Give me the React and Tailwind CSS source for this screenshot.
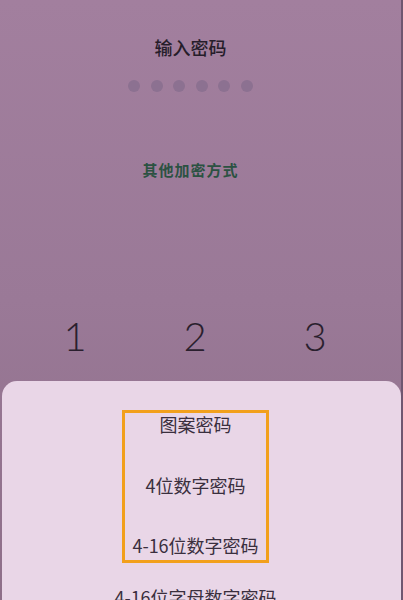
import React from 'react';

export default function App() {
  const dots = [0, 1, 2, 3, 4, 5];
  const keys = ['1', '2', '3'];
  const options = ['图案密码', '4位数字密码', '4-16位数字密码'];

  return (
    <div
      className="relative h-[600px] w-[403px] overflow-hidden bg-gradient-to-b from-[#a27f9e] via-[#9a7997] to-[#8e6f89]"
      style={{ fontFamily: '"Noto Sans CJK SC", "Noto Sans", sans-serif' }}
    >
      {/* 顶部 */}
      <div className="flex flex-col items-center pt-[34px] pr-[22px]">
        <div className="text-[18px] leading-[26px] font-medium text-[#261d2a]">输入密码</div>
        <div className="mt-[20px] flex gap-[10.5px]">
          {dots.map((d) => (
            <div key={d} className="h-[12px] w-[12px] rounded-full bg-[#8c7191]" />
          ))}
        </div>
        <div className="mt-[68px] text-[15px] leading-[20px] font-bold tracking-[1px] text-[#2b5242]">
          其他加密方式
        </div>
      </div>

      {/* 数字键 */}
      <div className="mt-[133px] ml-[15px] grid w-[360px] grid-cols-3 text-[#2a1f2e]">
        {keys.map((k) => (
          <div key={k} className="text-center text-[40px] leading-[46px] font-light" style={{ fontFamily: 'Lato, "Open Sans", sans-serif' }}>
            {k}
          </div>
        ))}
      </div>

      {/* 底部弹层 */}
      <div className="absolute left-[2px] right-[2px] top-[381px] bottom-0 rounded-t-[15px] bg-[#e9d6e7]">
        <div className="flex flex-col items-center pt-[29px] pr-[12px]">
          <div className="flex w-[147px] flex-col items-center border-[3px] border-[#f2a01c] pb-[3px] text-[#3a2f3e]">
            <div className="text-[18px] leading-[24px] -mt-[1px]">{options[0]}</div>
            <div className="mt-[37px] text-[18px] leading-[24px]">{options[1]}</div>
            <div className="mt-[36px] text-[18px] leading-[24px]">{options[2]}</div>
          </div>
          <div className="mt-[22px] text-[18px] leading-[24px] text-[#3a2f3e]">4-16位字母数字密码</div>
        </div>
      </div>
      <div className="absolute right-0 top-0 h-full w-[2px] bg-[#6f5670]" />
    </div>
  );
}
